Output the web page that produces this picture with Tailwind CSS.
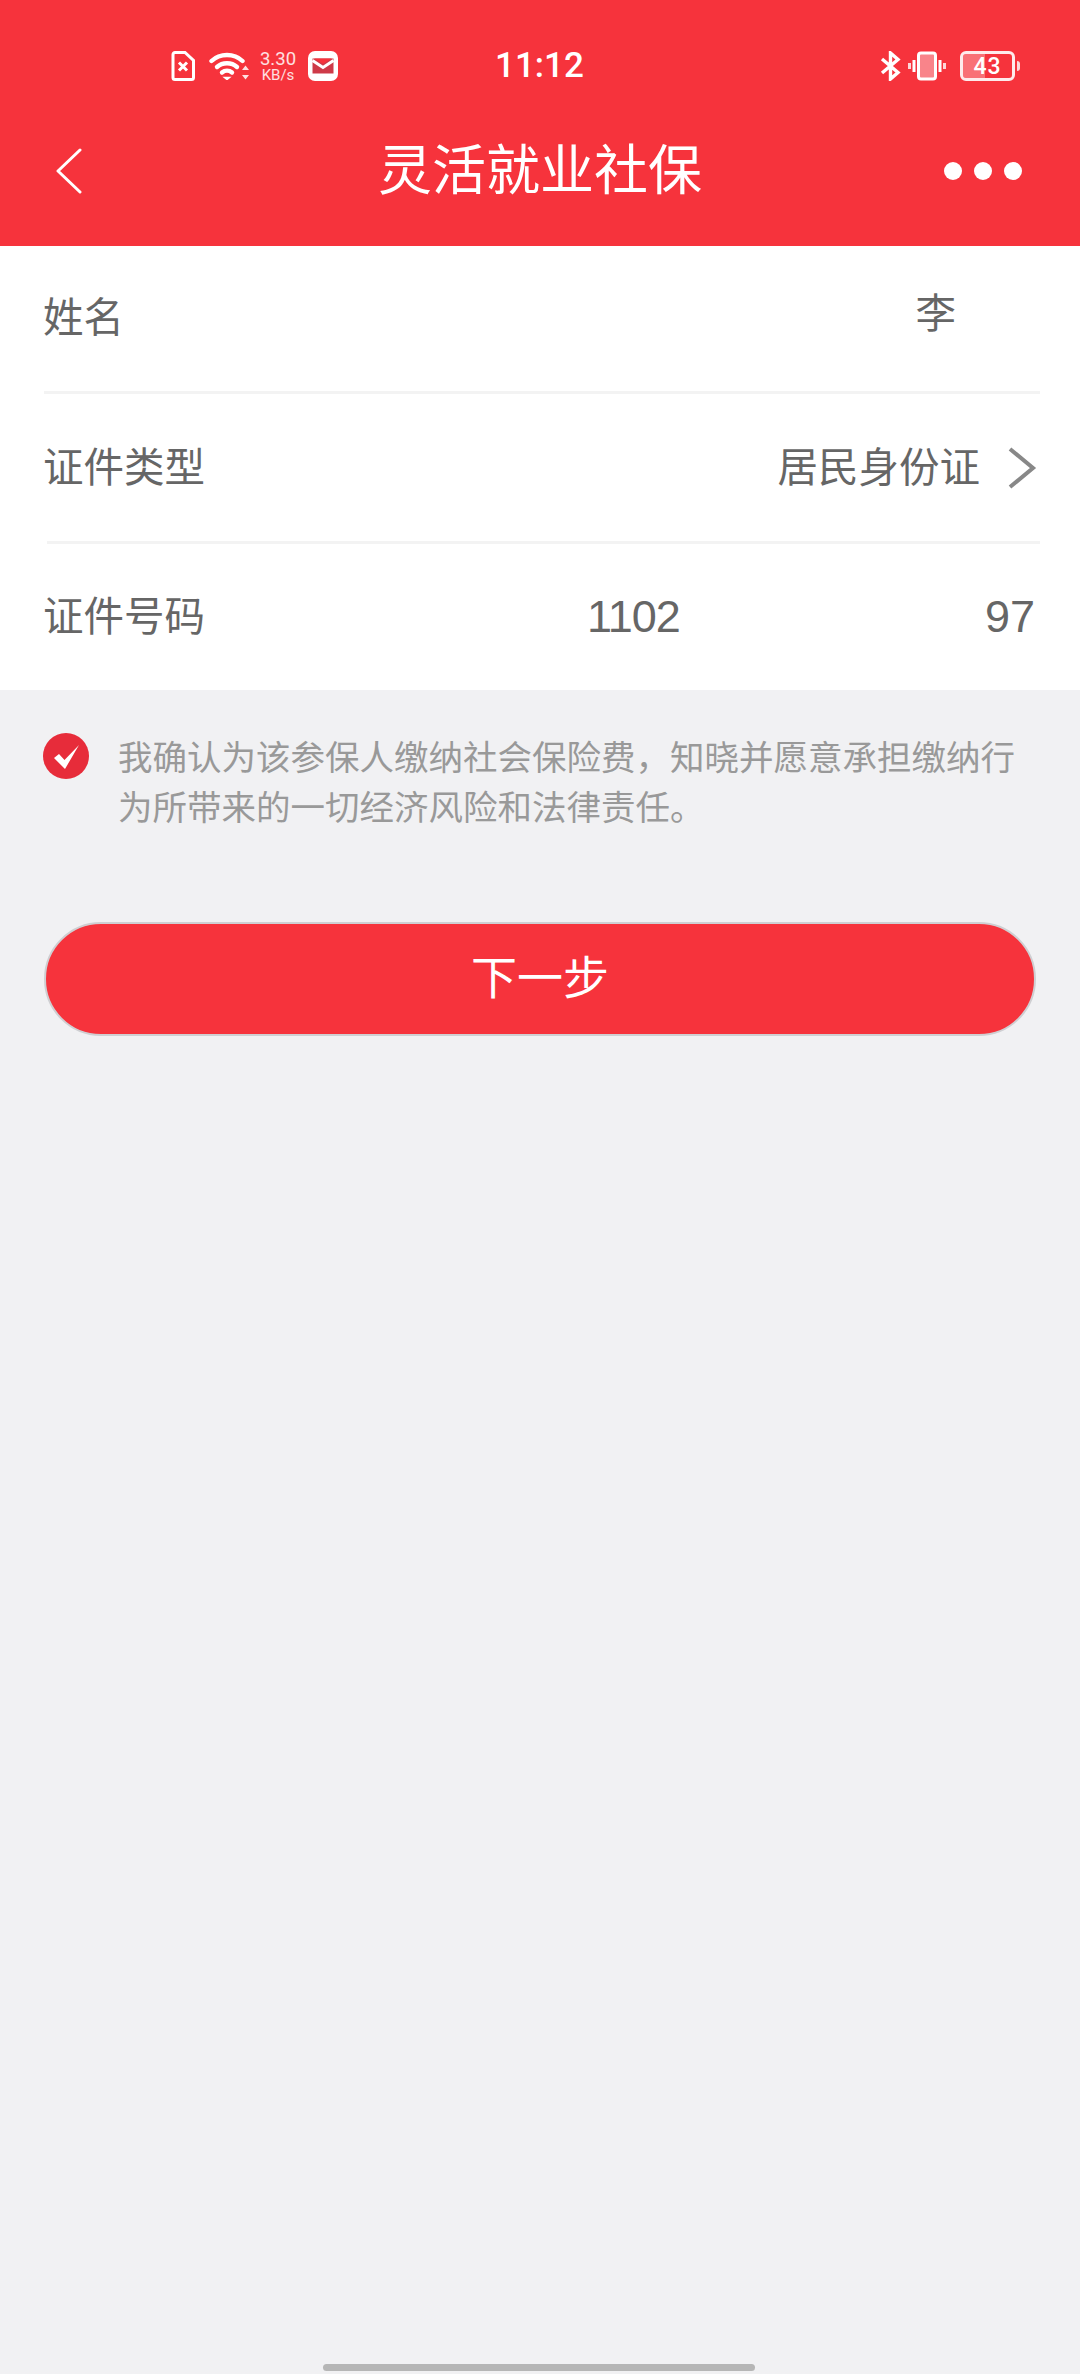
<!DOCTYPE html>
<html lang="zh-CN">
<head>
  <meta charset="utf-8">
  <title>灵活就业社保</title>
  <meta name="viewport" content="width=device-width, initial-scale=1">
  <script src="https://cdn.jsdelivr.net/npm/@tailwindcss/browser@4"></script>
</head>
<body class="relative w-[1080px] h-[2374px] overflow-hidden bg-[#f1f1f3] font-['Liberation_Sans','Noto_Sans_CJK_SC',sans-serif]">
  <header class="h-[246px] bg-[#f6333c] text-white">
    <!-- status bar -->
    <div class="h-[92px] pt-[50px] grid grid-cols-[1fr_auto_1fr] items-start">
      <div class="flex items-center pl-[171px] h-[32px]">
        <svg class="w-[24px] h-[30px]" viewBox="0 0 24 30" fill="none" stroke="#fff" stroke-width="3">
          <path d="M2 3.500a2 2 0 0 1 2-2h10l8.500 8V26.500a2 2 0 0 1-2 2H4a2 2 0 0 1-2-2z"/>
          <path d="M8 11.500l8 8M16 11.500l-8 8" stroke-width="3"/>
        </svg>
        <svg class="ml-[14px] w-[40px] h-[28px]" viewBox="0 0 40 28" fill="none" stroke="#fff" stroke-width="4.400" stroke-linecap="round">
          <path d="M2.500 9C11 1 25 1 33.500 9"/>
          <path d="M8 15C13.500 10 22.500 10 28 15"/>
          <path d="M13 20.500c3-2.500 7-2.500 10 0"/>
          <path d="M15.500 25.500h5l-2.500 2z" fill="#fff" stroke-width="1.500"/>
          <path d="M36.500 13.500l-3.500 4.500h7zM36.500 27.500l-3.500-4.500h7z" fill="#fff" fill-opacity=".85" stroke="none"/>
        </svg>
        <div class="ml-[8px] w-[42px] flex flex-col items-center font-['Roboto',sans-serif] text-white/85 leading-none">
          <span class="text-[18.500px] leading-[17px]">3.30</span>
          <span class="text-[15px] leading-[14px]">KB/s</span>
        </div>
        <svg class="ml-[9px] w-[30px] h-[30px]" viewBox="0 0 30 30">
          <rect width="30" height="30" rx="7" fill="#fff"/>
          <path d="M4.500 7.500h21v15h-21z" fill="#ce3a48"/>
          <path d="M4.500 9.500l10.500 7 10.500-7" fill="none" stroke="#fff" stroke-width="3"/>
          <path d="M6 7.500h18l-9 5.500z" fill="#f6333c"/>
        </svg>
      </div>
      <div class="w-[88px] mr-[2px] text-center font-['Roboto',sans-serif] font-medium text-[35px] leading-[32px]">11:12</div>
      <div class="flex items-center justify-end pr-[60px] h-[32px]">
        <svg class="w-[21px] h-[30px]" viewBox="0 0 21 30" fill="none" stroke="#fff" stroke-width="3.400">
          <path d="M2 8l16 13.500-7.500 6.500V2l7.500 6.500-16 13.500"/>
        </svg>
        <svg class="ml-[7px] w-[38px] h-[30px]" viewBox="0 0 38 30" fill="none" stroke="#fff" stroke-width="3">
          <rect x="10.500" y="2" width="17" height="26" rx="2.500" fill="#ffffff" fill-opacity=".4"/>
          <path d="M6 9v12M32 9v12" stroke-width="3"/>
          <path d="M1.500 12v6M36.500 12v6" stroke-width="3" stroke-opacity=".8"/>
        </svg>
        <div class="relative ml-[14px] w-[55px] h-[30px] rounded-[6px] border-[3px] border-white/90 overflow-hidden flex items-center justify-center">
          <div class="absolute left-0 top-0 bottom-0 w-[22px] bg-white/30"></div>
          <span class="relative font-['Roboto',sans-serif] font-medium text-[23px] tracking-[1px] leading-none">43</span>
        </div>
        <div class="ml-[2px] w-[3px] h-[10px] bg-white/80 rounded-r"></div>
      </div>
    </div>
    <!-- nav bar -->
    <div class="relative h-[154px] pt-[4px] flex items-center justify-between pl-[56px] pr-[58px]">
      <svg class="w-[26px] h-[46px]" viewBox="0 0 26 46" fill="none" stroke="#fff" stroke-width="3" stroke-linecap="round" stroke-linejoin="round">
        <path d="M24 2L2 23l22 21"/>
      </svg>
      <h1 class="absolute inset-0 pt-[4px] flex items-center justify-center text-[54px] leading-[70px] font-normal">灵活就业社保</h1>
      <div class="flex gap-[12px]">
        <span class="w-[18px] h-[18px] rounded-full bg-white"></span>
        <span class="w-[18px] h-[18px] rounded-full bg-white"></span>
        <span class="w-[18px] h-[18px] rounded-full bg-white"></span>
      </div>
    </div>
  </header>

  <main>
    <section class="h-[444px] bg-white text-[40.500px] leading-[56px] text-[#666]">
      <div class="relative h-[148px] pl-[43px] pr-[124px] pb-[4px] flex items-center justify-between">
        <span>姓名</span>
        <span class="pb-[8px]">李</span>
        <div class="absolute left-[44px] right-[40px] bottom-0 h-[3px] bg-[#f3f3f3]"></div>
      </div>
      <div class="relative h-[150px] pl-[43px] pr-[43px] pb-[2px] flex items-center justify-between">
        <span>证件类型</span>
        <div class="flex items-center">
          <span>居民身份证</span>
          <svg class="ml-[27px] w-[30px] h-[42px]" viewBox="0 0 30 42" fill="none" stroke="#888" stroke-width="4">
            <path d="M3 2l23 19L3 40"/>
          </svg>
        </div>
        <div class="absolute left-[47px] right-[40px] bottom-0 h-[3px] bg-[#f3f3f3]"></div>
      </div>
      <div class="h-[146px] pl-[43px] pr-[45px] flex items-center justify-between">
        <span>证件号码</span>
        <div class="w-[448px] flex justify-between text-[45px] tracking-[-1px]">
          <span>1102</span>
          <span class="tracking-normal">97</span>
        </div>
      </div>
    </section>

    <section class="pt-[43px] pl-[43px] pr-[58px] flex items-start">
      <svg class="shrink-0 w-[46px] h-[46px]" viewBox="0 0 46 46">
        <circle cx="23" cy="23" r="23" fill="#e72c3a"/>
        <path d="M11 25l5-4 5.500 6L36 12 22 36z" fill="#fff"/>
      </svg>
      <p class="ml-[29px] text-[34.500px] leading-[50px] text-[#999]">我确认为该参保人缴纳社会保险费，知晓并愿意承担缴纳行为所带来的一切经济风险和法律责任。</p>
    </section>

    <div class="px-[44px] mt-[89px]">
      <button class="w-full h-[114px] rounded-full bg-[#f6333c] border-[2px] border-[#cfcfd2] text-white text-[46px] pb-[2px]">下一步</button>
    </div>
  </main>

  <div class="absolute left-[323px] bottom-[3px] w-[432px] h-[7px] rounded-full bg-[#b6b6b6]"></div>
</body>
</html>
